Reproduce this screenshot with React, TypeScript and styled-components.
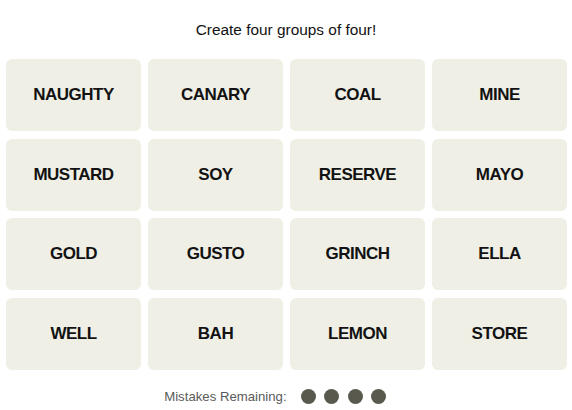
import React from 'react'
import styled, { createGlobalStyle } from 'styled-components'

const GlobalStyle = createGlobalStyle`
  body {
    margin: 0;
    background: #ffffff;
    font-family: 'Liberation Sans', Arial, sans-serif;
  }
`

const Page = styled.div`
  width: 572px;
  display: flex;
  flex-direction: column;
  align-items: center;
`

const Title = styled.h2`
  margin: 20px 0 0;
  height: 20px;
  line-height: 20px;
  font-size: 15.4px;
  font-weight: 400;
  color: #121212;
`

const Board = styled.div`
  margin-top: 19px;
  width: 561px;
  margin-left: 1px;
  display: grid;
  grid-template-columns: repeat(4, 135px);
  grid-auto-rows: 72px;
  column-gap: 7px;
  row-gap: 7.5px;
`

const Tile = styled.button`
  border: none;
  border-radius: 6px;
  background: #efefe6;
  color: #121212;
  font-family: 'Liberation Sans', Arial, sans-serif;
  font-size: 17px;
  letter-spacing: -0.5px;
  font-weight: 700;
  text-transform: uppercase;
  display: flex;
  align-items: center;
  justify-content: center;
  padding: 0;
  cursor: pointer;
`

const Footer = styled.div`
  margin-top: 19px;
  margin-right: 22px;
  display: flex;
  align-items: center;
  gap: 8.3px;
`

const Label = styled.span`
  font-size: 13.2px;
  color: #5a5a5a;
  margin-right: 6px;
`

const Dot = styled.span`
  width: 15px;
  height: 15px;
  border-radius: 50%;
  background: #5a594e;
`

const words = [
  'Naughty', 'Canary', 'Coal', 'Mine',
  'Mustard', 'Soy', 'Reserve', 'Mayo',
  'Gold', 'Gusto', 'Grinch', 'Ella',
  'Well', 'Bah', 'Lemon', 'Store',
]

export default function App() {
  const mistakes = 4
  return (
    <Page>
      <GlobalStyle />
      <Title>Create four groups of four!</Title>
      <Board>
        {words.map(w => (
          <Tile key={w}>{w}</Tile>
        ))}
      </Board>
      <Footer>
        <Label>Mistakes Remaining:</Label>
        {Array.from({ length: mistakes }).map((_, i) => (
          <Dot key={i} />
        ))}
      </Footer>
    </Page>
  )
}
